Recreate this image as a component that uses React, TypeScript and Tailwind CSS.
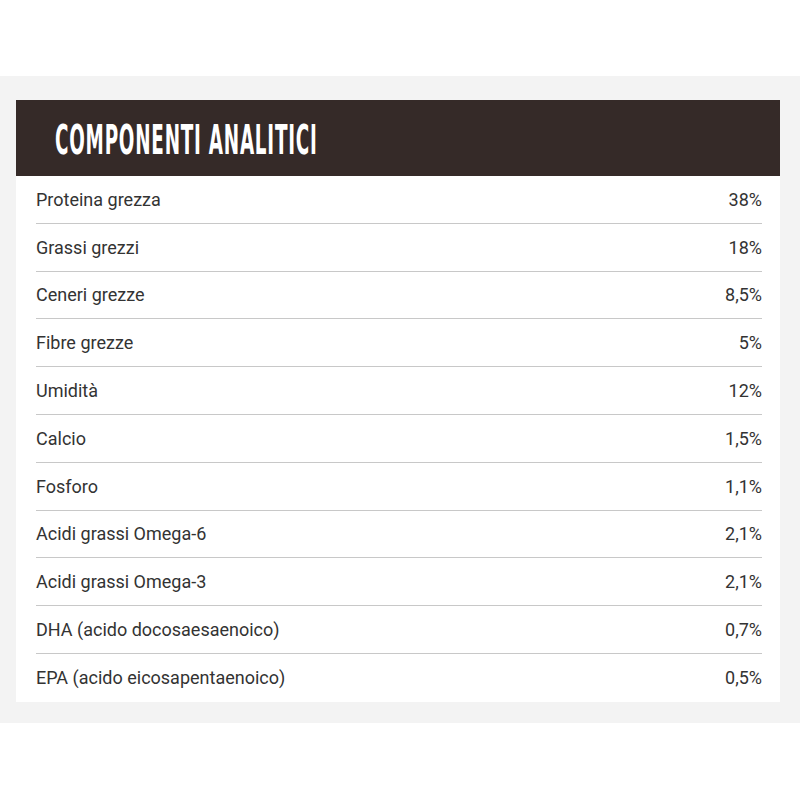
import React from "react";

const rows: [string, string][] = [
  ["Proteina grezza", "38%"],
  ["Grassi grezzi", "18%"],
  ["Ceneri grezze", "8,5%"],
  ["Fibre grezze", "5%"],
  ["Umidità", "12%"],
  ["Calcio", "1,5%"],
  ["Fosforo", "1,1%"],
  ["Acidi grassi Omega-6", "2,1%"],
  ["Acidi grassi Omega-3", "2,1%"],
  ["DHA (acido docosaesaenoico)", "0,7%"],
  ["EPA (acido eicosapentaenoico)", "0,5%"],
];

export default function App() {
  return (
    <div className="w-[800px] h-[800px] bg-white pt-[76px]">
      <div className="bg-[#f3f3f3] h-[647px] pt-[24px] px-[16px]">
        <div className="bg-white w-[764px]">
          <div className="bg-[#352a28] h-[76px] flex items-center pl-[39px]">
            <span
              className="text-white font-bold text-[40px] leading-none origin-left scale-x-[0.51] whitespace-nowrap tracking-[1.5px] pt-[3px]"
              style={{ fontFamily: '"DejaVu Sans Condensed", "DejaVu Sans", sans-serif' }}
            >
              COMPONENTI ANALITICI
            </span>
          </div>
          <div className="pl-[20px] pr-[18px]" style={{ fontFamily: "Roboto, sans-serif" }}>
            {rows.map(([k, v], i) => (
              <div
                key={k}
                className={`flex justify-between items-center h-[47.8px] text-[18px] text-[#333333] ${
                  i < rows.length - 1 ? "border-b border-[#c8c8c8]" : ""
                }`}
              >
                <span>{k}</span>
                <span>{v}</span>
              </div>
            ))}
          </div>
        </div>
      </div>
    </div>
  );
}
